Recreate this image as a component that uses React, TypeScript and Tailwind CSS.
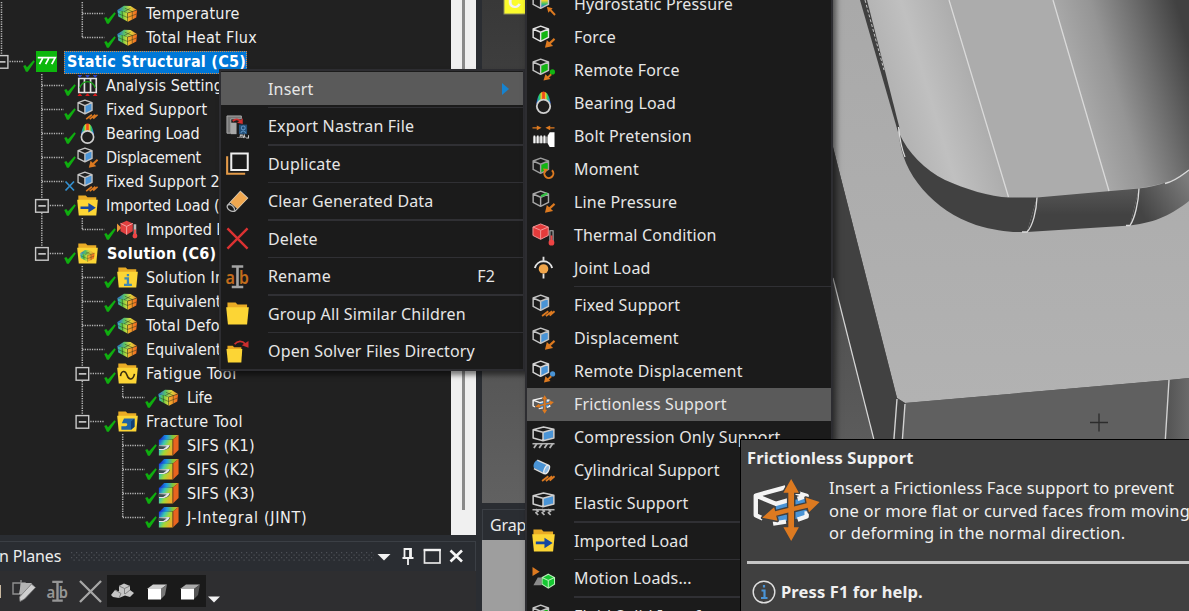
import type { ReactNode } from 'react';

type Kind =
  | 'hydro' | 'force' | 'remoteForce' | 'bearing' | 'bolt' | 'moment' | 'line' | 'thermal' | 'joint'
  | 'fixed' | 'disp' | 'remoteDisp' | 'frictionless' | 'compression' | 'cylinder' | 'elastic'
  | 'imported' | 'motion' | 'fluid'
  | 'export' | 'duplicate' | 'clear' | 'delete' | 'rename' | 'folder' | 'open' | 'none'
  | 'result' | 'static' | 'settings' | 'importedTemp' | 'solution' | 'info' | 'fatigue' | 'fracture' | 'sifs';

const ORANGE = '#dd7a20';
const GREEN = '#12b512';
const BLUE = '#4a94d6';

function Cube({ face, stroke = '#c4c4c4' }: { face: string; stroke?: string }) {
  return (
    <g strokeLinejoin="round">
      <path d="M9 8 17.2 4.6V13L9 16.8Z" fill={face} />
      <path d="M9 1.2 17.2 4.2V13L9 17 1.2 13V4.2ZM1.2 4.2 9 7.6 17.2 4.2M9 7.6V17" fill="none" stroke={stroke} strokeWidth="1.5" />
    </g>
  );
}

function Arrow() {
  return (
    <g>
      <path d="M23.5 14.5 17 20.5" stroke={ORANGE} strokeWidth="2.2" />
      <path d="M13.500 23.700 15.500 15.700 22 22Z" fill={ORANGE} />
    </g>
  );
}

function Hatch() {
  return <path d="M10.500 23 17 18M14.500 23 21 18M18.5 22.5 23.5 18" stroke={ORANGE} strokeWidth="1.9" fill="none" />;
}

function Folder() {
  return (
    <g>
      <path d="M1.5 .5H10L12 2.500H22V7H1.5Z" fill="#e9ab25" />
      <path d="M.2 5.500H23.8L22 23.5H2Z" fill="#fcd535" />
    </g>
  );
}

function Box({ feet }: { feet: ReactNode }) {
  return (
    <g strokeLinejoin="round">
      <path d="M11.500 6.500 22.5 4V12L11.500 15Z" fill={BLUE} />
      <path d="M1.200 4 12 1 22.8 3.4V12.500L11.500 15.500 1.200 12.500ZM1.200 4 11.500 6.5 22.8 3.4M11.500 6.5V15.500" fill="none" stroke="#cfcfcf" strokeWidth="1.6" />
      <path d="M.5 18.500H23.5" stroke="#b5b5b5" strokeWidth="1.6" />
      {feet}
    </g>
  );
}

function Frictionless({ gap }: { gap: string }) {
  return (
    <g strokeLinejoin="round">
      <path d="M9 9.500 21 7.200V14.600L9 17Z" fill={BLUE} />
      <path d="M12.8 3.2 1.300 6.400V14L4 15.300M1.300 6.400 9 9.600 14 8.200M16.500 5.200 21 6.500 17.500 7.700M8 17.300 13 16.500M17.500 15.700 21 14.500V12.500" fill="none" stroke="#f4f4f4" strokeWidth="1.700" />
      <g stroke={gap} strokeWidth="1.100">
        <path d="M15 0 18 5.300H16.100V10.600L21 9.400 20.600 7.200 26 8.900 21.900 12.900 21.400 11.100 16.100 12.400V18.700H18L15 24 12 18.700H13.900V13L9.200 14.200 9.700 16.200 3.800 15 8.400 10.900 8.800 12.500 13.900 11.200V5.300H12Z" fill={ORANGE} paintOrder="stroke" />
      </g>
    </g>
  );
}

function ResultCube() {
  return (
    <g strokeLinejoin="round">
      <path d="M.5 8 8 3 15.500 3.500 22.8 8 12 11.500Z" fill="url(#resTop)" />
      <path d="M.5 8 12 11.500 12.500 21.500 1.500 15.500Z" fill="url(#resLeft)" />
      <path d="M12 11.500 23 8 22 16.500 12.500 21.500Z" fill="url(#resRight)" />
      <path d="M12 11.500V21.500M12 11.500 23 8M6 9.700 6.500 18M1 12 12 16.500 22.500 12.500M17.500 9.700V19M9 6 17 9.500M8 10 15.500 6" fill="none" stroke="#27351c" strokeOpacity=".6" strokeWidth=".9" />
    </g>
  );
}

function Caret({ color, bar }: { color: string; bar: string }) {
  return (
    <g>
      <g fill={color} fontSize="18" fontFamily="'Noto Sans', sans-serif" fontWeight="600">
        <text x="-.5" y="19.500" textLength="10" lengthAdjust="spacingAndGlyphs">a</text>
        <text x="13.500" y="19.500" textLength="10.500" lengthAdjust="spacingAndGlyphs">b</text>
      </g>
      <path d="M6 1.5H18M6 23H18M12 2V23" stroke={bar} strokeWidth="2.7" />
    </g>
  );
}

function Glyph({ kind }: { kind: Kind }) {
  switch (kind) {
    case 'hydro':
      return <><Cube face="url(#rainV)" /><path d="M24 24 18.5 18" stroke={ORANGE} strokeWidth="2" /><path d="M15.5 15.5 21.5 17 17 21.6Z" fill={ORANGE} /></>;
    case 'force':
      return <><Cube face={GREEN} stroke="#e2e2e2" /><Arrow /></>;
    case 'remoteForce':
      return <><Cube face={GREEN} /><circle cx="21.3" cy="14.5" r="2.7" fill={GREEN} /><path d="M20 17 16.5 20.5" stroke={ORANGE} strokeWidth="2" /><path d="M12 23.5 14 17 19.3 22Z" fill={ORANGE} /></>;
    case 'bearing':
      return <><path d="M4.500 13C6 6 7.500 1 12 .5 16.500 1 18 6 19.500 13Z" fill="url(#rainH)" /><circle cx="12" cy="16" r="7" fill="#1e1e1e" stroke="#cfcfcf" strokeWidth="1.9" /></>;
    case 'bolt':
      return <>
        <path d="M.5 4H7M17 4H23.5" stroke={ORANGE} strokeWidth="1.4" />
        <path d="M5 1.5 10 4 5 6.5ZM19 1.5 14 4 19 6.5Z" fill={ORANGE} />
        <path d="M1 13H17V20H1Z" fill="#8c8c8c" />
        <path d="M2.5 12V20M6 12V20M9.5 12V20M13 12V20" stroke="#f4f4f4" strokeWidth="1.7" />
        <path d="M16.5 12 18.5 8.5H23.5V24H18.5L16.5 20.5Z" fill="#fff" />
      </>;
    case 'moment':
      return <><Cube face={GREEN} stroke="#9c9c9c" /><path d="M20.8 13.8A4.7 4.7 0 1 1 14 14.2" fill="none" stroke={ORANGE} strokeWidth="2.1" /><path d="M11.5 12 17 12.6 13.6 17Z" fill={ORANGE} /></>;
    case 'line':
      return <><Cube face="none" stroke="#a8a8a8" /><path d="M9.5 6.5 16 3.5" stroke="#35c046" strokeWidth="2.4" /><Arrow /></>;
    case 'thermal':
      return <><path d="M9 1 17 4.2V13L9 17 1 13V4.2Z" fill="#e43b3b" /><path d="M1 4.2 9 7.6 17 4.2M9 7.6V17M9 1 17 4.2V13L9 17 1 13V4.2Z" fill="none" stroke="#f19a9a" strokeWidth="1" />
        <path d="M18.700 8H22V20H18.700Z" fill="#222" stroke="#b5b5b5" strokeWidth="1.1" /><path d="M20.3 13V19" stroke="#ee4444" strokeWidth="2" /><circle cx="20.3" cy="20.5" r="3" fill="#ee4444" /></>;
    case 'joint':
      return <><circle cx="12" cy="13.5" r="5" fill="#f0a54a" /><path d="M3 12.5A9.3 9.3 0 0 1 21 12.5" fill="none" stroke="#e4e4e4" strokeWidth="2" /><path d="M12 .8V5M12 18.5V23.5" stroke="#e4e4e4" strokeWidth="1.9" /></>;
    case 'fixed':
      return <><Cube face={BLUE} /><Hatch /></>;
    case 'disp':
      return <><Cube face={BLUE} /><Arrow /></>;
    case 'remoteDisp':
      return <><Cube face={BLUE} stroke="#d6d6d6" /><circle cx="21.5" cy="14.5" r="2.7" fill={BLUE} /><path d="M20 17 16.5 20.5" stroke={ORANGE} strokeWidth="2" /><path d="M12.5 23.5 14 17 19.3 22Z" fill={ORANGE} /></>;
    case 'frictionless':
      return <g transform="translate(0 2.4) scale(.88 .8)"><Frictionless gap="#5a5a5a" /></g>;
    case 'compression':
      return <Box feet={<path d="M2 23 5 18.500M7.5 23 10.5 18.500M13 23 16 18.500M18.5 23 21.5 18.500" stroke="#b5b5b5" strokeWidth="1.9" />} />;
    case 'elastic':
      return <Box feet={<path d="M4 18 6.5 20 4 21.5 6.5 24M10.5 18 13 20 10.5 21.5 13 24M17 18 19.5 20 17 21.5 19.5 24" fill="none" stroke="#b5b5b5" strokeWidth="1.7" />} />;
    case 'cylinder':
      return <><path d="M6 1 17 6.5C19 8.5 17 14 13.5 15L2 9.5C.5 6 3 1.5 6 1Z" fill={BLUE} /><path d="M5.5 1.2 17 6.5M2 10 13 15.5" stroke="#dcdcdc" strokeWidth="1.4" /><ellipse cx="15.3" cy="11" rx="2.3" ry="4.8" transform="rotate(26 15.3 11)" fill="#8fbbe4" stroke="#ececec" strokeWidth="1.3" /><Hatch /></>;
    case 'imported':
      return <><Folder /><path d="M4 13H13V9L21.5 14.5 13 20V16H4Z" fill="#1648a0" /></>;
    case 'motion':
      return <><path d="M.5 0 8 5 .5 9.500Z" fill={ORANGE} /><path d="M1.5 19 6 11H10V19Z" fill="#8a8a8a" /><path d="M17 7.500 23.5 11V18L17 22 10.500 18V11Z" fill="#16c832" /><path d="M10.500 11 17 14 23.5 11M17 14V22M17 7.500 23.5 11V18L17 22 10.500 18V11Z" fill="none" stroke="#b8efb8" strokeWidth="1.1" /></>;
    case 'fluid':
      return <Cube face={GREEN} />;
    case 'export':
      return <><path d="M1 1H16V4H5V19H1Z" fill="#777" stroke="#aaa" strokeWidth="1" /><path d="M5 8H11V20H5Z" fill="#a8a8a8" /><path d="M7 6.5C10 3.5 13 4 15.5 7" fill="none" stroke="#d03030" strokeWidth="1.8" /><path d="M17.5 3.5V9.5L11.5 8Z" fill="#d03030" /><path d="M13.500 10H22V20H13.500Z" fill="#234f78" /><circle cx="18" cy="13.5" r="2" fill="none" stroke="#5d93c2" strokeWidth="1.1" /><path d="M15.5 19C16 16 20 16 20.5 19" fill="none" stroke="#5d93c2" strokeWidth="1.1" /><path d="M12 23.5H13M14.5 24 15 21H17L16.5 24M18 24 19 21 20 24M21 24H23.5V21" fill="none" stroke="#c9c9c9" strokeWidth="1.1" /></>;
    case 'duplicate':
      return <><path d="M1.2 4.5V22.7H20" fill="none" stroke="#e39a48" strokeWidth="2.2" /><path d="M5.5 1.5H22.7V18.8H5.5Z" fill="#1b1b1b" stroke="#f0f0f0" strokeWidth="2.1" /></>;
    case 'clear':
      return <><path d="M1.5 16 15 1.5 22.5 8.5 10 21.5C6 24 0 20 1.5 16Z" fill="#1b1b1b" stroke="#bababa" strokeWidth="1.3" /><path d="M4.5 12.8 15 1.5 22.5 8.5 12 19.5Z" fill="#f0a850" stroke="#e5c79b" strokeWidth=".8" /><path d="M2 15.5C5 14 9.5 18 9 21.5" fill="none" stroke="#bababa" strokeWidth="1.3" /></>;
    case 'delete':
      return <path d="M1.5 1.5 22.5 22.5M22.5 1.5 1.5 22.5" stroke="#dc3232" strokeWidth="2.5" />;
    case 'rename':
      return <Caret color="#c26c1c" bar="#a4a4a4" />;
    case 'folder':
      return <Folder />;
    case 'open':
      return <><path d="M1.5 6H7L8.5 7.5H16V11H1.5Z" fill="#e9a91f" /><path d="M.5 9.5H17L16 23.5H2Z" fill="#fcd535" /><path d="M9 4.5C12 .5 17 .5 20 4" fill="none" stroke="#cc2e2e" strokeWidth="1.8" /><path d="M23.5 1V8L16.5 5.5Z" fill="#cc2e2e" /></>;
    case 'result':
      return <ResultCube />;
    case 'static':
      return <><path d="M0 0H24V24H0Z" fill="#0db70d" /><path d="M2 7.5H8L4 15M9 7.5H15L11 15M16 7.5H22L18 15" fill="none" stroke="#fff" strokeWidth="2" /></>;
    case 'settings':
      return <><path d="M2 4H22V20H2ZM8.500 4V20M15.500 4V20" fill="none" stroke="#e0e0e0" strokeWidth="1.9" /><path d="M3 15C5 9 9 7.5 12 7.5S19 9 21 15" fill="none" stroke="#17a017" strokeWidth="1.5" /><path d="M.5 0H6L3.250 3.5ZM9.3 0H14.7L12 3.5ZM18 0H23.500L20.75 3.5Z" fill="#2b45c4" /><path d="M.5 24H6L3.250 20.5ZM9.3 24H14.7L12 20.5ZM18 24H23.500L20.75 20.5Z" fill="#d81818" /></>;
    case 'importedTemp':
      return <><path d="M0 5 5 10 0 15Z" fill="#e8963a" /><path d="M11 2 18 5V14L11 18 4 14V5Z" fill="#e04040" /><path d="M4 5 11 8.5 18 5M11 8.5V18" fill="none" stroke="#f4a3a3" strokeWidth="1.1" /><path d="M20.5 6V19" stroke="#b9b9b9" strokeWidth="3" /><path d="M20.5 12V19" stroke="#ee4444" strokeWidth="2" /><circle cx="20.5" cy="19.500" r="2.8" fill="#ee4444" /></>;
    case 'solution':
      return <><Folder /><g transform="translate(3.3 5.800) scale(.73 .73)"><ResultCube /></g></>;
    case 'info':
      return <><Folder /><path d="M12.5 8V10.5M8.5 13H12.5V20.5M8 20.5H17" stroke="#3f88b4" strokeWidth="2.6" fill="none" /></>;
    case 'fatigue':
      return <><Folder /><path d="M4 15C5 8 9.5 8 11.5 14S18.5 20 20 12.5" fill="none" stroke="#3b2d10" strokeWidth="1.8" /></>;
    case 'fracture':
      return <><Folder /><path d="M8 8.500H20V18L16 21.500H5V17.500H10C12 17 12.500 14.500 10.500 14H5.500Z" fill="#1f64a6" /><path d="M16 12V21.500L20 18V8.500Z" fill="#123f74" /></>;
    case 'sifs':
      return <><path d="M1 6 7 0H23.5L17 5Z" fill="url(#sifTop)" /><path d="M17 5 23.5 0V17L17 23.5Z" fill="#e8641e" /><path d="M1 5.5H17V23.5H1V17H8C12 16 14 14 13.5 11.5L1 12Z" fill="url(#sifFront)" /><path d="M1 12 13.5 11.5C13 14 11 16.5 7 17L1 17Z" fill="#e6e6e6" /><path d="M1 12.5 10 13 6 16 1 16Z" fill="#3e4f52" /><path d="M17 5V23.5" stroke="#52301a" strokeWidth=".9" /></>;
    default:
      return null;
  }
}

function Icon({ kind, className }: { kind: Kind; className: string }) {
  return (
    <svg viewBox="0 0 24 24" className={className} overflow="visible" aria-hidden="true">
      <Glyph kind={kind} />
    </svg>
  );
}

function Gradients() {
  return (
    <svg className="absolute size-0" aria-hidden="true">
      <defs>
        <linearGradient id="rainH"><stop offset="0" stopColor="#2a5cff" /><stop offset=".22" stopColor="#27d06a" /><stop offset=".36" stopColor="#e8c52a" /><stop offset=".44" stopColor="#f04a1c" /><stop offset=".56" stopColor="#f04a1c" /><stop offset=".64" stopColor="#e8c52a" /><stop offset=".78" stopColor="#27d06a" /><stop offset="1" stopColor="#2a5cff" /></linearGradient>
        <linearGradient id="rainV" x2="0" y2="1"><stop offset="0" stopColor="#e23a1c" /><stop offset=".35" stopColor="#f0d32a" /><stop offset=".65" stopColor="#35c06a" /><stop offset="1" stopColor="#2a4cff" /></linearGradient>
        <linearGradient id="resTop"><stop offset="0" stopColor="#2c66e0" /><stop offset=".35" stopColor="#54c26a" /><stop offset=".65" stopColor="#dcd83c" /><stop offset="1" stopColor="#ee8a2c" /></linearGradient>
        <linearGradient id="resLeft"><stop offset="0" stopColor="#36a4e8" /><stop offset=".4" stopColor="#52c84a" /><stop offset="1" stopColor="#e8dc3a" /></linearGradient>
        <linearGradient id="resRight"><stop offset="0" stopColor="#f2b830" /><stop offset="1" stopColor="#f0641e" /></linearGradient>
        <linearGradient id="sifTop"><stop offset="0" stopColor="#1414c8" /><stop offset=".4" stopColor="#1f9ae0" /><stop offset=".7" stopColor="#7ac83c" /><stop offset="1" stopColor="#f0a020" /></linearGradient>
        <linearGradient id="sifFront" x2="1" y2=".6"><stop offset="0" stopColor="#1436e8" /><stop offset=".35" stopColor="#3cc8b0" /><stop offset=".65" stopColor="#a8d832" /><stop offset="1" stopColor="#f2a82a" /></linearGradient>
      </defs>
    </svg>
  );
}

/* ---------- Outline tree ---------- */

interface Node {
  label: string;
  icon: Kind;
  depth: 0 | 1 | 2 | 3;
  /** Letter spacing of the label. */
  track: string;
  /** Depths whose vertical guide runs through the whole row. */
  through?: number[];
  /** The guide of the row's own depth stops here. */
  last?: boolean;
  box?: boolean;
  mark?: 'check' | 'cross';
  bold?: boolean;
  selected?: boolean;
}

const nodes: Node[] = [
  { label: 'Temperature', icon: 'result', depth: 2, through: [0], track: 'tracking-[0.25px]' },
  { label: 'Total Heat Flux', icon: 'result', depth: 2, through: [0], last: true, track: 'tracking-[0.3px]' },
  { label: 'Static Structural (C5)', icon: 'static', depth: 0, last: true, box: true, bold: true, selected: true, track: 'tracking-[0.28px]' },
  { label: 'Analysis Settings', icon: 'settings', depth: 1, track: 'tracking-[0.1px]' },
  { label: 'Fixed Support', icon: 'fixed', depth: 1, track: 'tracking-[0.2px]' },
  { label: 'Bearing Load', icon: 'bearing', depth: 1, track: 'tracking-[-0.1px]' },
  { label: 'Displacement', icon: 'disp', depth: 1, track: 'tracking-[-0.35px]' },
  { label: 'Fixed Support 2', icon: 'fixed', depth: 1, mark: 'cross', track: 'tracking-[0.1px]' },
  { label: 'Imported Load (', icon: 'imported', depth: 1, box: true, track: 'tracking-[-0.1px]' },
  { label: 'Imported B', icon: 'importedTemp', depth: 2, through: [1], last: true, track: 'tracking-[0px]' },
  { label: 'Solution (C6)', icon: 'solution', depth: 1, last: true, box: true, bold: true, track: 'tracking-[0.25px]' },
  { label: 'Solution In', icon: 'info', depth: 2, track: 'tracking-[0.15px]' },
  { label: 'Equivalent ', icon: 'result', depth: 2, track: 'tracking-[-0.1px]' },
  { label: 'Total Defo', icon: 'result', depth: 2, track: 'tracking-[0.2px]' },
  { label: 'Equivalent', icon: 'result', depth: 2, track: 'tracking-[-0.1px]' },
  { label: 'Fatigue Tool', icon: 'fatigue', depth: 2, box: true, track: 'tracking-[0.5px]' },
  { label: 'Life', icon: 'result', depth: 3, through: [2], last: true, track: 'tracking-[-0.2px]' },
  { label: 'Fracture Tool', icon: 'fracture', depth: 2, last: true, box: true, track: 'tracking-[0.45px]' },
  { label: 'SIFS (K1)', icon: 'sifs', depth: 3, track: 'tracking-[0.35px]' },
  { label: 'SIFS (K2)', icon: 'sifs', depth: 3, track: 'tracking-[0.35px]' },
  { label: 'SIFS (K3)', icon: 'sifs', depth: 3, track: 'tracking-[0.35px]' },
  { label: 'J-Integral (JINT)', icon: 'sifs', depth: 3, last: true, track: 'tracking-[0.7px]' },
];

const guideX = [1.5, 41.8, 82.3, 122.7];
const guideWidths = ['w-[23px]', 'w-[64px]', 'w-[104px]', 'w-[145px]'];

function Guides({ node }: { node: Node }) {
  const x = guideX[node.depth];
  const dash = { stroke: '#b4b4b4', strokeWidth: 1.5, strokeDasharray: '1.3 1.1' };
  return (
    <svg className={`h-6 shrink-0 ${guideWidths[node.depth]}`} overflow="visible" aria-hidden="true">
      {(node.through ?? []).map((d) => (
        <line key={d} x1={guideX[d]} x2={guideX[d]} y1="0" y2="24" {...dash} />
      ))}
      <line x1={x} x2={x} y1="0" y2={node.box ? 4 : 12} {...dash} />
      {!node.last && <line x1={x} x2={x} y1={node.box ? 19 : 12} y2="24" {...dash} />}
      <line x1={node.box ? x + 8 : x} x2={x + 22} y1="11.6" y2="11.6" {...dash} />
      {node.box && (
        <g fill="none" stroke="#c9c9c9" strokeWidth="1.4">
          <rect x={x - 6.2} y="5.6" width="12.6" height="12.6" />
          <line x1={x - 3.5} x2={x + 4} y1="11.9" y2="11.9" stroke="#e8e8e8" />
        </g>
      )}
    </svg>
  );
}

function TreeRow({ node }: { node: Node }) {
  return (
    <div className="flex h-6 items-center whitespace-nowrap">
      <Guides node={node} />
      <svg viewBox="0 0 12 12" className="mt-[8px] h-3 w-[12px] shrink-0" aria-hidden="true">
        {node.mark === 'cross' ? (
          <path d="M1.5 1.5 10 10.5M10 1.5 1.5 10.5" stroke="#3490d0" strokeWidth="1.7" />
        ) : (
          <path d="M.2 6 2.300 5 4 7.2 10.5.3 11.8 1.500 4.8 11.8 2.900 11.8Z" fill="#0fae0f" />
        )}
      </svg>
      <Icon kind={node.icon} className="mb-px ml-px size-[21px] shrink-0" />
      {node.selected ? (
        <span className={`ml-[7px] flex h-[23px] items-center border border-dotted border-[#e08a3c] bg-[#0078d7] pl-[2px] text-[16px] font-bold text-white ${node.track}`}>
          {node.label}
        </span>
      ) : (
        <span className={`text-[16px] ${node.bold ? 'ml-[9px] font-bold text-white' : 'ml-[8px] text-[#f0f0f0]'} ${node.track}`}>
          {node.label}
        </span>
      )}
    </div>
  );
}

function Outline() {
  return (
    <div className="flex h-[535px] w-[476px] shrink-0 overflow-hidden bg-[#212121]">
      <div className="min-w-0 flex-1 overflow-hidden pt-[2px] font-['DejaVu_Sans_Condensed','DejaVu_Sans',sans-serif] [font-stretch:condensed]">
        {nodes.map((n) => (
          <TreeRow key={n.label} node={n} />
        ))}
      </div>
      <div className="flex w-[25px] bg-[#f0f0f0] pl-[11px]">
        <div className="h-[510px] w-[3px] bg-[#8a8a8a]" />
      </div>
    </div>
  );
}

/* ---------- Section planes dock ---------- */

function Planes() {
  return (
    <div className="mt-[6px] flex w-[476px] flex-1 flex-col border-t border-[#3b3f45] bg-[#2e2e30]">
      <div className="flex h-[29px] items-center border-r border-[#3b3f45] bg-[#2a2d32] font-['Noto_Sans',sans-serif] text-[16px] text-[#ececec]">
        <span className="-ml-px w-[72px] pb-px tracking-[-0.15px] whitespace-nowrap">n Planes</span>
        <svg className="h-[10px] w-[303px]" aria-hidden="true">
          <defs>
            <pattern id="grip" width="5" height="5" patternUnits="userSpaceOnUse">
              <rect width="1.2" height="1.2" fill="#4c5056" />
              <rect x="2.5" y="2.5" width="1.2" height="1.2" fill="#4c5056" />
            </pattern>
          </defs>
          <rect width="303" height="10" fill="url(#grip)" />
        </svg>
        <svg viewBox="0 0 92 20" className="mb-px ml-[3px] h-5 w-[92px]" aria-hidden="true">
          <path d="M.5 8H13.5L7 14.5Z" fill="#f2f2f2" />
          <path d="M25.5 12H36.5M27.5 12V3H34V12M33 3V12M31 12V19" fill="none" stroke="#f2f2f2" strokeWidth="1.8" />
          <rect x="47.500" y="4" width="15.500" height="13" fill="none" stroke="#e6e6e6" strokeWidth="1.7" />
          <path d="M46.700 4H63.800" stroke="#f2f2f2" strokeWidth="2.4" />
          <path d="M73.5 4.500 85 15.5M85 4.500 73.5 15.5" stroke="#f6f6f6" strokeWidth="2.6" />
        </svg>
      </div>
      <div className="flex flex-1 items-center">
        <span className="h-[13px] w-px bg-[#c9b8a0]" />
        <svg viewBox="0 0 24 24" className="ml-[11px] size-6" aria-hidden="true">
          <path d="M1 4H13V15H1ZM9 1V18" fill="none" stroke="#909090" strokeWidth="1.4" />
          <path d="M9 4H20L12 15H7Z" fill="#b4b4b4" />
          <path d="M19.500 5 23.500 8.500 12.500 20 8 22.500 7.5 18Z" fill="#d0d0d0" stroke="#777" strokeWidth=".8" />
        </svg>
        <svg viewBox="0 0 24 24" className="ml-[11px] h-6 w-[21px]" overflow="visible" aria-hidden="true">
          <Caret color="#969696" bar="#969696" />
        </svg>
        <svg viewBox="0 0 24 24" className="ml-[11px] size-[23px]" aria-hidden="true">
          <path d="M1 1 23 23M23 1 1 23" stroke="#a6a6a6" strokeWidth="2.4" />
        </svg>
        <div className="ml-[5px] flex h-8 w-[99px] items-center bg-[#1a1a1a]">
          <svg viewBox="0 0 99 32" className="h-8 w-[99px]" aria-hidden="true">
            <path d="M4 20 8 15 12 16.500 12 11 17 8.500 23 11V15L27 18 23 22 18 20.500 12 23 6 22Z" fill="#c6c6c6" />
            <path d="M12 11 17.500 13.5 23 11M17.500 13.5V19M8 15 14 18.500 12 23M23 15 18 19" fill="none" stroke="#808080" strokeWidth="1" />
            <path d="M40 14 46 9.5H60L54 14Z" fill="#d0d0d0" /><path d="M54 14 60 9.5 58 20 54 24Z" fill="#777" /><rect x="41" y="14" width="13" height="10.5" fill="#fff" />
            <path d="M73 14 79 9.5H93L87 14Z" fill="#a9a9a9" /><path d="M87 14 93 9.5 91 20 87 24Z" fill="#555" /><rect x="74" y="14" width="13" height="10.5" fill="#fff" />
          </svg>
        </div>
        <svg viewBox="0 0 12 7" className="mt-4 ml-[2px] h-[7px] w-3" aria-hidden="true">
          <path d="M0 .5H12L6 6.5Z" fill="#f2f2f2" />
        </svg>
      </div>
    </div>
  );
}

/* ---------- Graphics viewport ---------- */

function Scene() {
  return (
    <svg viewBox="482 0 707 503" className="h-[503px] w-[707px] bg-linear-to-b from-[#383838] to-[#616161]" aria-hidden="true">
      <defs>
        <linearGradient id="topFace" x2="0" y2="1"><stop offset="0" stopColor="#a9a9a9" /><stop offset="1" stopColor="#b2b2b2" /></linearGradient>
        <linearGradient id="slotL" gradientUnits="userSpaceOnUse" x1="866" y1="0" x2="946" y2="-24">
          <stop offset="0" stopColor="#b4b4b4" /><stop offset=".4" stopColor="#c0c0c0" /><stop offset="1" stopColor="#ababab" />
        </linearGradient>
        <linearGradient id="slotR" gradientUnits="userSpaceOnUse" x1="1053" y1="0" x2="1166" y2="-33">
          <stop offset="0" stopColor="#a8a8a8" /><stop offset=".3" stopColor="#959595" /><stop offset=".65" stopColor="#6c6c6c" /><stop offset="1" stopColor="#414141" />
        </linearGradient>
        <linearGradient id="wall" gradientUnits="userSpaceOnUse" x1="1140" y1="210" x2="1189" y2="180">
          <stop offset="0" stopColor="#444" /><stop offset="1" stopColor="#7c7c7c" />
        </linearGradient>
        <linearGradient id="wallM" x2="0" y2="1"><stop offset="0" stopColor="#565656" /><stop offset=".6" stopColor="#424242" /></linearGradient>
        <linearGradient id="corner"><stop offset="0" stopColor="#525252" /><stop offset="1" stopColor="#6a6a6a" /></linearGradient>
      </defs>
      <path d="M820 0H1189V378L1169 380 905 403 897 398 833 147 820 90Z" fill="url(#topFace)" />
      <path d="M833 147 897 398 893 440V503H890L833 278 820 230V90Z" fill="#414141" />
      <path d="M833 278 874 440" stroke="#d8d8d8" strokeWidth="1.2" fill="none" />
      <path d="M897 398 905 403 902 445H893Z" fill="#444" />
      <path d="M905 403 1169 380 1165 445V503H900Z" fill="#606060" />
      <path d="M1169 380 1189 378V445H1165Z" fill="url(#corner)" />
      <path d="M897 399 893.5 445M905 404 902 445M1169 380 1165 445" stroke="#d2d2d2" strokeWidth="1.4" fill="none" />
      <path d="M864 0H949L1009 197C990 196 965 189 945 180 925 170 908 153 899 133Z" fill="url(#slotL)" />
      <path d="M949 0H1053L1109 191 1037 197H1009Z" fill="#acacac" />
      <path d="M1053 0H1189V170C1175 180 1165 184 1140 188L1109 191Z" fill="url(#slotR)" />
      <path d="M860 0H867L899.5 128 898 132Z" fill="#404040" />
      <path d="M865 0 884 70" stroke="#c4c4c4" strokeWidth="1" strokeDasharray="3 2" fill="none" />
      <path d="M899 133C908 153 925 170 945 180 965 189 990 197 1009 197.500H1037L1027 232C1010 232.500 997 231 976 225 935 211 901 175 899 133Z" fill="#414141" />
      <path d="M1037 197.500 1139 188.500 1130 225.500 1027 232Z" fill="url(#wallM)" />
      <path d="M1139 188.500C1160 186 1175 180 1189 170V201C1172 214 1158 222 1130 225.500Z" fill="url(#wall)" />
      <path d="M949 0 1008.500 197M1053 0 1109 191M898.500 127C899.500 137 901 147 905 157M1037 197.500C1036.500 210 1033 226 1027 232H1022M1139 188.500C1138.500 202 1135 218 1130 225.500H1126M1165 183.500C1176 181 1182 175 1189 170" stroke="#dadada" strokeWidth="1.3" fill="none" />
      <path d="M1099 413.500V431.500M1090 422.500H1108" stroke="#2c2c2c" strokeWidth="1.3" />
      <rect x="504" y="-10" width="30" height="24" fill="#fbfb2c" stroke="#8c8c5c" strokeWidth="1" />
      <text x="508.500" y="7.500" fill="#f2f2f2" fontSize="18" fontWeight="700" fontFamily="'Liberation Sans', sans-serif">C</text>
    </svg>
  );
}

/* ---------- Menus ---------- */

interface Item {
  label: string;
  icon: Kind;
  shortcut?: string;
  active?: boolean;
  submenu?: boolean;
  /** A rule is drawn above the entry. */
  rule?: boolean;
}

const contextItems: Item[] = [
  { label: 'Insert', icon: 'none', active: true, submenu: true },
  { label: 'Export Nastran File', icon: 'export', rule: true },
  { label: 'Duplicate', icon: 'duplicate', rule: true },
  { label: 'Clear Generated Data', icon: 'clear', rule: true },
  { label: 'Delete', icon: 'delete', rule: true },
  { label: 'Rename', icon: 'rename', shortcut: 'F2', rule: true },
  { label: 'Group All Similar Children', icon: 'folder', rule: true },
  { label: 'Open Solver Files Directory', icon: 'open', rule: true },
];

const insertItems: Item[] = [
  { label: 'Hydrostatic Pressure', icon: 'hydro' },
  { label: 'Force', icon: 'force' },
  { label: 'Remote Force', icon: 'remoteForce' },
  { label: 'Bearing Load', icon: 'bearing' },
  { label: 'Bolt Pretension', icon: 'bolt' },
  { label: 'Moment', icon: 'moment' },
  { label: 'Line Pressure', icon: 'line' },
  { label: 'Thermal Condition', icon: 'thermal' },
  { label: 'Joint Load', icon: 'joint' },
  { label: 'Fixed Support', icon: 'fixed', rule: true },
  { label: 'Displacement', icon: 'disp' },
  { label: 'Remote Displacement', icon: 'remoteDisp' },
  { label: 'Frictionless Support', icon: 'frictionless', active: true },
  { label: 'Compression Only Support', icon: 'compression' },
  { label: 'Cylindrical Support', icon: 'cylinder' },
  { label: 'Elastic Support', icon: 'elastic' },
  { label: 'Imported Load', icon: 'imported', rule: true },
  { label: 'Motion Loads...', icon: 'motion', rule: true },
  { label: 'Fluid Solid Interface', icon: 'fluid', rule: true },
];

function MenuItem({ item }: { item: Item }) {
  return (
    <>
      {item.rule && (
        <div className="flex h-[4.5px] items-center pl-[47px]">
          <div className="h-[1.5px] flex-1 bg-[#303034]" />
        </div>
      )}
      <div className={item.active ? 'flex h-[33px] items-center bg-[#5a5a5a] pl-[5px]' : 'flex h-[33px] items-center pl-[5px]'}>
        <Icon kind={item.icon} className="size-[23px] shrink-0" />
        <span className="ml-[19px] flex-1 whitespace-nowrap">{item.label}</span>
        {item.shortcut && <span className="mr-[28px]">{item.shortcut}</span>}
        {item.submenu && (
          <svg viewBox="0 0 7 12" className="mr-[14px] h-3 w-[7px]" aria-hidden="true">
            <path d="M0 0 7 6 0 12Z" fill="#1683d0" />
          </svg>
        )}
      </div>
    </>
  );
}

export default function App() {
  return (
    <div className="relative flex h-[611px] w-[1189px] overflow-hidden bg-[#2a2d32]">
      <Gradients />
      <div className="flex h-full w-[482px] shrink-0 flex-col">
        <Outline />
        <Planes />
      </div>
      <div className="flex h-full min-w-0 flex-1 flex-col">
        <Scene />
        <div className="mt-[6px] flex h-[31px] items-center border-t border-l border-[#3b3f45] pl-[7px] font-['Noto_Sans',sans-serif] text-[16px] tracking-[-0.1px] text-[#ececec]">
          Grap
        </div>
        <div className="flex-1 bg-[#9e9e9e]" />
      </div>

      <div className="absolute top-[69px] left-[219px] h-[302px] w-[306px] border-2 border-[#2d2d31] bg-[#1b1b1b] pt-px font-['Noto_Sans',sans-serif] text-[16px] tracking-[0.17px] text-[#e6e6e6] shadow-[3px_4px_5px_rgba(0,0,0,0.5)]">
        {contextItems.map((i) => (
          <MenuItem key={i.label} item={i} />
        ))}
      </div>

      <div className="absolute -top-[14px] left-[525px] h-[640px] w-[308px] border-x-2 border-[#2d2d31] bg-[#1b1b1b] pt-[1px] font-['Noto_Sans',sans-serif] text-[16px] tracking-[0.17px] text-[#e6e6e6] shadow-[3px_0_6px_rgba(0,0,0,0.55)]">
        {insertItems.map((i) => (
          <MenuItem key={i.label} item={i} />
        ))}
      </div>

      <div className="absolute top-[439px] left-[740px] flex h-[180px] w-[460px] flex-col border border-black bg-[#404040] pl-[6px] font-['Noto_Sans',sans-serif] text-[16.5px] tracking-[0.12px] text-[#f0f0f0]">
        <div className="mt-[7px] h-[22px] leading-[22px] font-bold">Frictionless Support</div>
        <div className="mt-[8px] flex h-[69px]">
          <svg viewBox="0 0 26 24" className="mt-[2px] ml-[5px] h-[62px] w-[68px] shrink-0" aria-hidden="true">
            <Frictionless gap="#404040" />
          </svg>
          <div className="ml-[9px] leading-[22.6px] whitespace-nowrap">
            <div>Insert a Frictionless Face support to prevent</div>
            <div className="tracking-[0.2px]">one or more flat or curved faces from moving</div>
            <div className="tracking-[0.2px]">or deforming in the normal direction.</div>
          </div>
        </div>
        <div className="mt-[15px] h-[3px] bg-[#c6c6c6]" />
        <div className="mt-[16px] flex items-center gap-[5px] font-bold">
          <svg viewBox="0 0 24 24" className="ml-[5px] size-[24px]" aria-hidden="true">
            <circle cx="12" cy="12" r="10.800" fill="none" stroke="#e0e0e0" strokeWidth="1.400" />
            <path d="M12 5V7.500M9.500 10.500H12.500V18M9 18H15.500" fill="none" stroke={BLUE} strokeWidth="2.200" />
          </svg>
          Press F1 for help.
        </div>
      </div>
    </div>
  );
}
